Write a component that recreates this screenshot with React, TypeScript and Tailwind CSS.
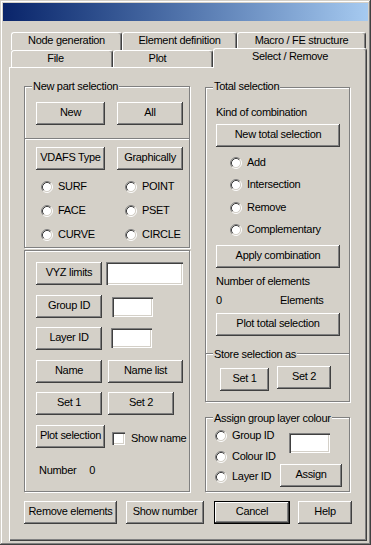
import type { ReactNode } from 'react'

const raised = 'shadow-[inset_-1px_-1px_#404040,inset_1px_1px_#ffffff,inset_-2px_-2px_#808080]'
const etched = 'border border-[#808080] shadow-[inset_1px_1px_#ffffff,1px_1px_#ffffff]'

function Btn({ className = '', def = false, children }: { className?: string; def?: boolean; children: ReactNode }) {
  return (
    <button
      type="button"
      className={`flex h-[23px] shrink-0 items-center justify-center whitespace-nowrap bg-[#d4d0c8] pb-[2px] ${raised} ${def ? 'border border-black' : ''} ${className}`}
    >
      {children}
    </button>
  )
}

function Field({ className = '' }: { className?: string }) {
  return (
    <div
      className={`shrink-0 bg-white shadow-[inset_1px_1px_#808080,inset_2px_2px_#404040,inset_-1px_-1px_#ffffff,inset_-2px_-2px_#d4d0c8] ${className}`}
    />
  )
}

function Radio() {
  return (
    <svg width="12" height="12" viewBox="0 0 12 12" className="shrink-0">
      <circle cx="6" cy="6" r="4.5" fill="#ffffff" />
      <path d="M2.11 9.89A5.5 5.5 0 0 1 9.89 2.11" stroke="#808080" fill="none" />
      <path d="M9.89 2.11A5.5 5.5 0 0 1 2.11 9.89" stroke="#ffffff" fill="none" />
      <path d="M2.82 9.18A4.5 4.5 0 0 1 9.18 2.82" stroke="#404040" fill="none" />
      <path d="M9.18 2.82A4.5 4.5 0 0 1 2.82 9.18" stroke="#d4d0c8" fill="none" />
    </svg>
  )
}

function Option({ className = '', children }: { className?: string; children: ReactNode }) {
  return (
    <div className={`flex h-[13px] items-center gap-[5px] whitespace-nowrap ${className}`}>
      <Radio />
      <span>{children}</span>
    </div>
  )
}

function Tab({ className = '', children }: { className?: string; children: ReactNode }) {
  return (
    <div
      className={`flex shrink-0 justify-center whitespace-nowrap rounded-t-[3px] border-t border-l border-r border-t-white border-l-white border-r-[#404040] bg-[#d4d0c8] pt-px shadow-[inset_-1px_0_#808080] ${className}`}
    >
      {children}
    </div>
  )
}

export default function App() {
  return (
    <div className="h-[545px] w-[371px] overflow-hidden bg-[#d4d0c8] p-[3px] font-['Liberation_Sans',Arial,sans-serif] text-[11px] leading-[13px] tracking-[-0.3px] text-black shadow-[inset_-1px_-1px_#404040,inset_1px_1px_#d4d0c8,inset_-2px_-2px_#808080,inset_2px_2px_#ffffff]">
      {/* Title bar */}
      <div className="h-[18px] bg-linear-to-r from-[#0a246a] to-[#a6caf0]" />

      {/* Tabs */}
      <div className="ml-[8px] mt-[11px] flex h-[18px]">
        <Tab className="h-[18px] w-[111px]">Node generation</Tab>
        <Tab className="h-[18px] w-[115px]">Element definition</Tab>
        <Tab className="h-[18px] w-[129px]">Macro / FE structure</Tab>
      </div>
      <div className="ml-[8px] flex h-[17px]">
        <Tab className="h-[17px] w-[102px] pr-[13px]">File</Tab>
        <Tab className="h-[17px] w-[100px] pr-[11px]">Plot</Tab>
        <Tab className="relative z-10 -mt-[2px] h-[20px] w-[154px]">Select / Remove</Tab>
      </div>

      {/* Page */}
      <div className="ml-[6px] h-[474px] w-[358px] pl-[15px] pt-[19px] shadow-[inset_1px_1px_#ffffff,inset_-1px_-1px_#404040,inset_-2px_-2px_#808080]">
        <div className="flex">
          {/* Left column */}
          <div className="w-[166px]">
            <div className={`relative h-[162px] ${etched}`}>
              <span className="absolute -top-[7px] left-[7px] bg-[#d4d0c8] px-px">New part selection</span>
              <div className="flex pl-[11px] pt-[15px]">
                <Btn className="w-[69px]">New</Btn>
                <Btn className="ml-[12px] w-[66px]">All</Btn>
              </div>
              <div className="mt-[13px] h-[2px] border-t border-b border-t-[#808080] border-b-white" />
              <div className="mt-[7px] flex pl-[11px]">
                <Btn className="w-[69px]">VDAFS Type</Btn>
                <Btn className="ml-[12px] w-[66px]">Graphically</Btn>
              </div>
              <div className="mt-[10px] grid grid-cols-[84px_1fr] gap-y-[11px] pl-[16px]">
                <Option>SURF</Option>
                <Option>POINT</Option>
                <Option>FACE</Option>
                <Option>PSET</Option>
                <Option>CURVE</Option>
                <Option>CIRCLE</Option>
              </div>
            </div>

            <div className={`relative mt-[2px] h-[242px] pl-[11px] pt-[11px] ${etched}`}>
              <div className="flex">
                <Btn className="w-[66px]">VYZ limits</Btn>
                <Field className="ml-[4px] h-[23px] w-[77px]" />
              </div>
              <div className="mt-[10px] flex items-start">
                <Btn className="w-[66px]">Group ID</Btn>
                <Field className="ml-[10px] mt-[2px] h-[20px] w-[41px]" />
              </div>
              <div className="mt-[9px] flex items-start">
                <Btn className="w-[66px]">Layer ID</Btn>
                <Field className="ml-[9px] mt-px h-[20px] w-[41px]" />
              </div>
              <div className="mt-[10px] flex">
                <Btn className="w-[66px]">Name</Btn>
                <Btn className="ml-[6px] w-[75px]">Name list</Btn>
              </div>
              <div className="mt-[9px] flex">
                <Btn className="w-[66px]">Set 1</Btn>
                <Btn className="ml-[6px] w-[66px]">Set 2</Btn>
              </div>
              <div className="mt-[10px] flex items-start">
                <Btn className="w-[69px]">Plot selection</Btn>
                <div className="ml-[7px] mt-[7px] flex h-[13px] items-center">
                  <Field className="h-[13px] w-[13px]" />
                  <span className="ml-[6px] whitespace-nowrap">Show name</span>
                </div>
              </div>
              <div className="mt-[16px] flex pl-[3px]">
                <span>Number</span>
                <span className="ml-[13px]">0</span>
              </div>
            </div>
          </div>

          {/* Right column */}
          <div className="ml-[15px] w-[145px] pt-px">
            <div className={`relative h-[315px] ${etched}`}>
              <span className="absolute -top-[8px] left-[7px] bg-[#d4d0c8] px-px">Total selection</span>
              <div className="pl-[10px] pt-[18px]">
                <div>Kind of combination</div>
                <Btn className="mt-[5px] w-[124px]">New total selection</Btn>
                <div className="pl-[14px]">
                  <Option className="mt-[9px]">Add</Option>
                  <Option className="mt-[9px]">Intersection</Option>
                  <Option className="mt-[10px]">Remove</Option>
                  <Option className="mt-[9px]">Complementary</Option>
                </div>
                <Btn className="mt-[9px] w-[124px]">Apply combination</Btn>
                <div className="mt-[7px]">Number of elements</div>
                <div className="mt-[6px] flex">
                  <span className="w-[64px]">0</span>
                  <span>Elements</span>
                </div>
                <Btn className="mt-[6px] w-[124px]">Plot total selection</Btn>
              </div>
              <div className="relative mt-[17px] h-[2px] border-t border-b border-t-[#808080] border-b-white">
                <span className="absolute -top-[6px] left-[7px] whitespace-nowrap bg-[#d4d0c8] px-px">
                  Store selection as
                </span>
              </div>
              <div className="mt-[11px] flex items-start pl-[14px]">
                <Btn className="mt-[2px] w-[49px]">Set 1</Btn>
                <Btn className="ml-[8px] w-[54px]">Set 2</Btn>
              </div>
            </div>

            <div className={`relative mt-[15px] flex h-[75px] ${etched}`}>
              <span className="absolute -top-[6px] left-[7px] whitespace-nowrap bg-[#d4d0c8] px-px">
                Assign group layer colour
              </span>
              <div className="w-[74px] pl-[9px] pt-[11px]">
                <Option>Group ID</Option>
                <Option className="mt-[8px]">Colour ID</Option>
                <Option className="mt-[7px]">Layer ID</Option>
              </div>
              <div className="pt-[15px]">
                <Field className="ml-[9px] h-[20px] w-[41px]" />
                <Btn className="mt-[11px] w-[62px]">Assign</Btn>
              </div>
            </div>
          </div>
        </div>

        {/* Dialog buttons */}
        <div className="mt-[9px] flex">
          <Btn className="w-[93px]">Remove elements</Btn>
          <Btn className="ml-[9px] w-[78px]">Show number</Btn>
          <Btn def className="ml-[10px] w-[76px]">Cancel</Btn>
          <Btn className="ml-[8px] w-[54px]">Help</Btn>
        </div>
      </div>
    </div>
  )
}
